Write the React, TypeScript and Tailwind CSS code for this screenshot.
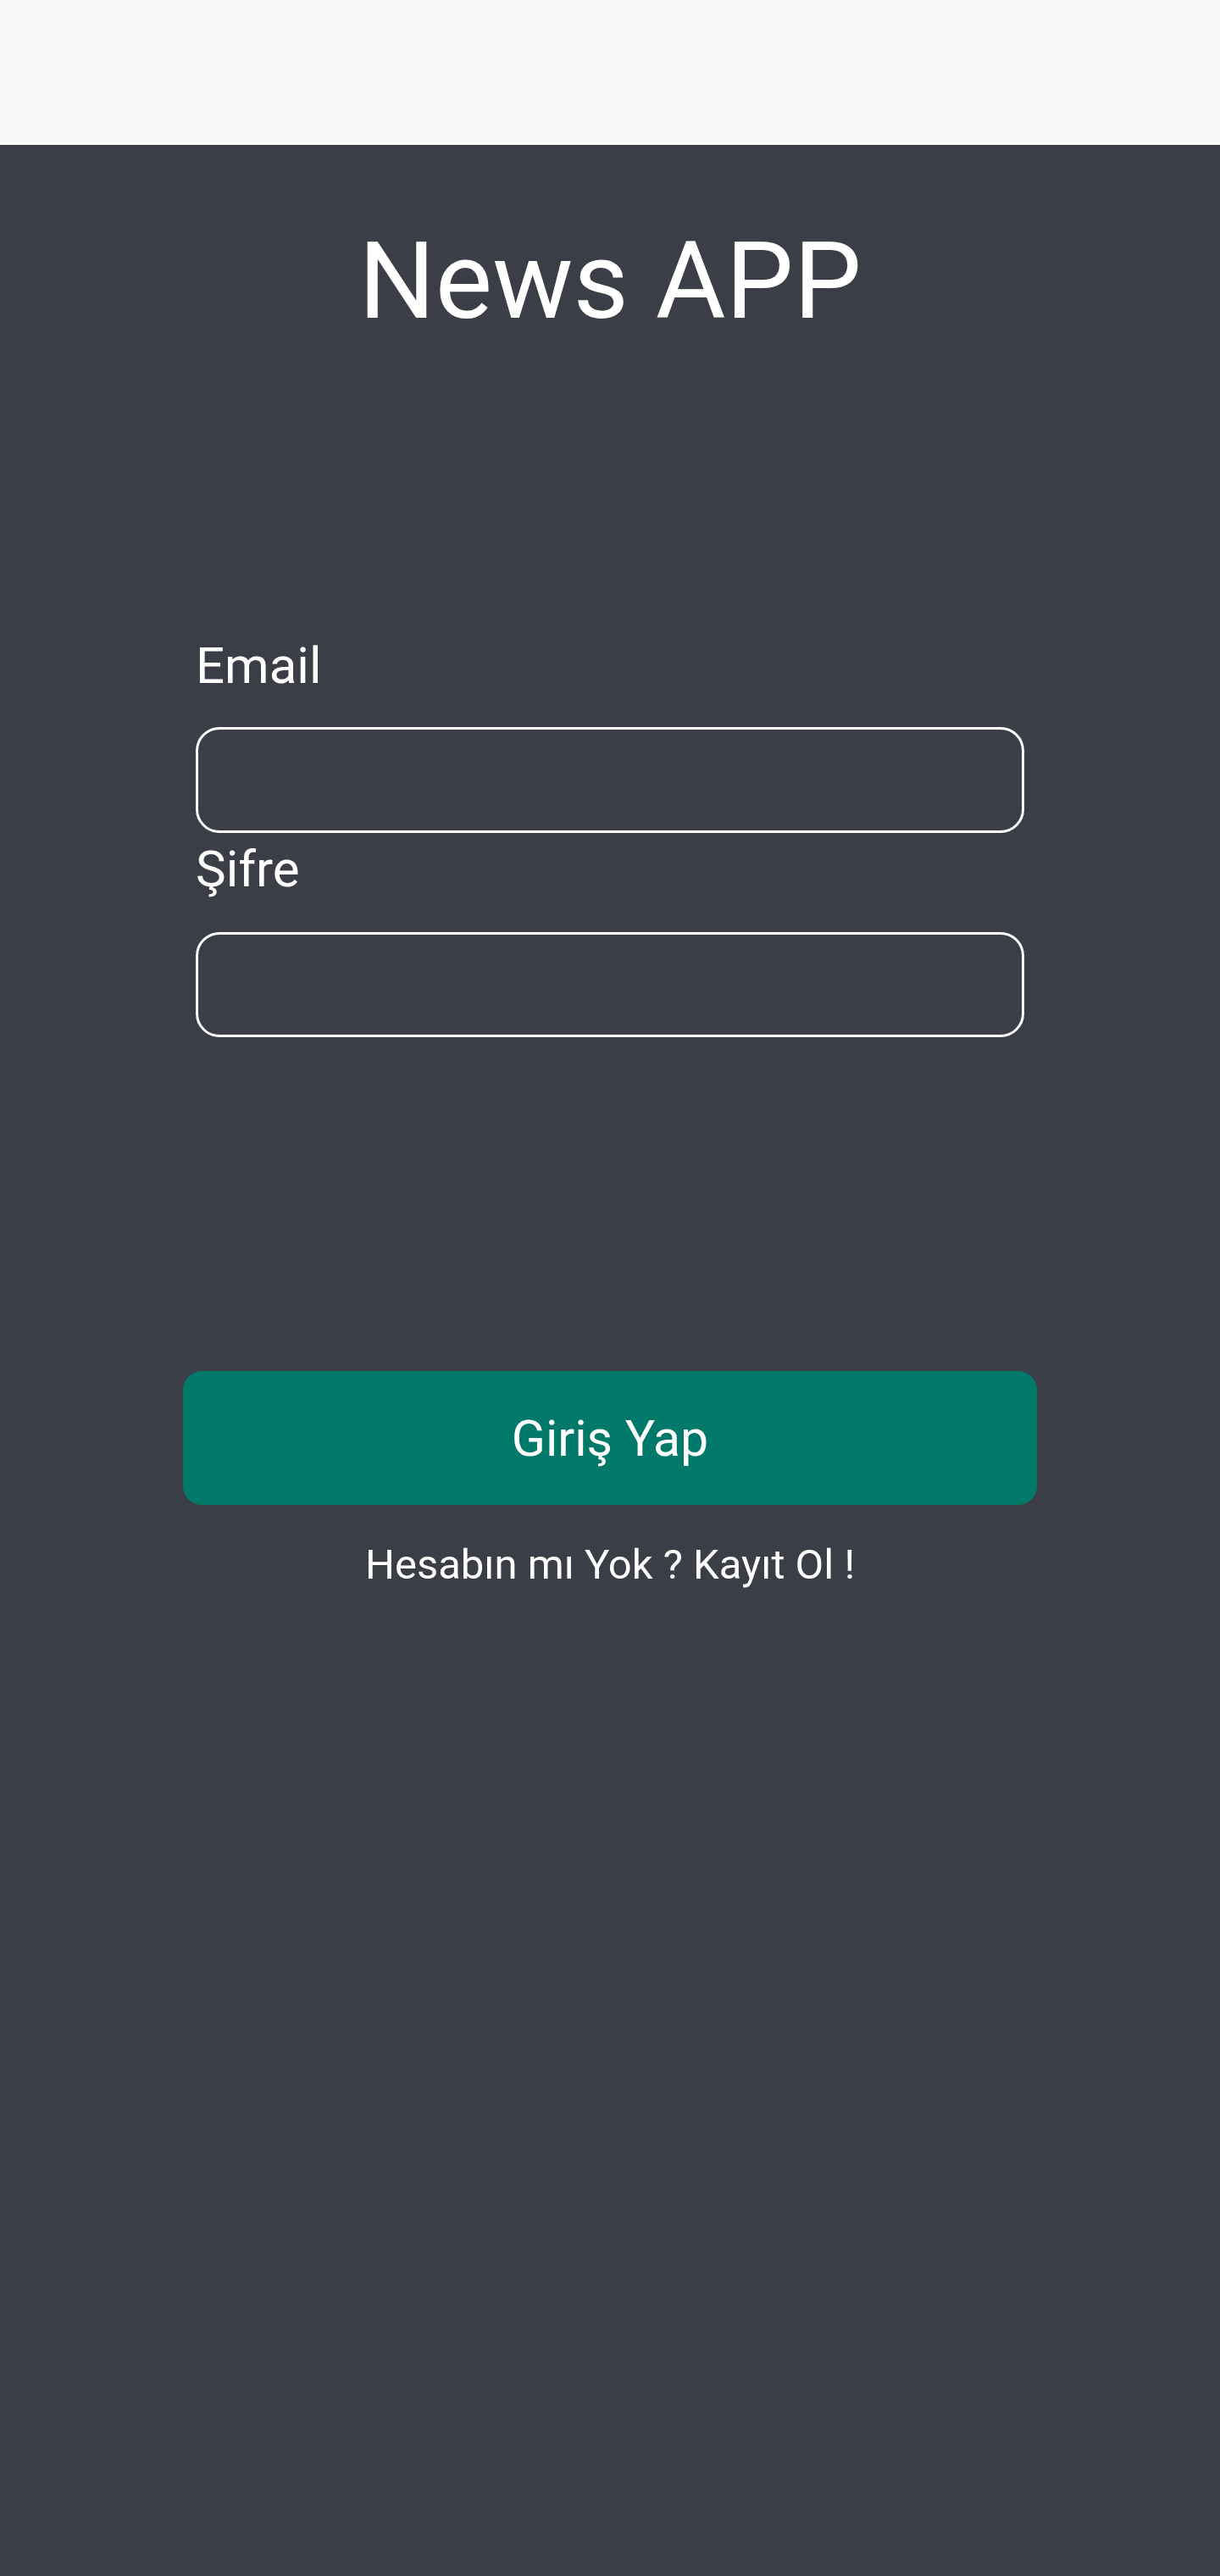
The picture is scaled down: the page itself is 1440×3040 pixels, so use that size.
import React from 'react'

export default function App() {
  return (
    <div className="min-h-[3040px] bg-[#3b3d47] font-['Roboto',sans-serif] text-white">
      <div className="h-[171px] bg-[#f9f9f9]" />

      <main className="flex flex-col items-center">
        <h1 className="mt-[97px] text-[127px] font-normal leading-none">News APP</h1>

        <form className="mt-[361px] flex w-[978px] flex-col" onSubmit={(e) => e.preventDefault()}>
          <label htmlFor="email" className="text-[60px] leading-none">
            Email
          </label>
          <input
            id="email"
            type="email"
            className="mt-[42px] h-[125px] w-full rounded-[28px] border-[3px] border-white bg-transparent px-8 text-[50px] outline-none"
          />

          <label htmlFor="password" className="mt-[13px] text-[60px] leading-none">
            Şifre
          </label>
          <input
            id="password"
            type="password"
            className="mt-[44px] h-[124px] w-full rounded-[28px] border-[3px] border-white bg-transparent px-8 text-[50px] outline-none"
          />
        </form>

        <button
          type="button"
          className="mt-[394px] flex h-[158px] w-[1008px] items-center justify-center rounded-[22px] bg-[#00796b] text-[59px] leading-none"
        >
          Giriş Yap
        </button>

        <a href="#" className="mt-[46px] text-[49px] leading-none">
          Hesabın mı Yok ? Kayıt Ol !
        </a>
      </main>
    </div>
  )
}
